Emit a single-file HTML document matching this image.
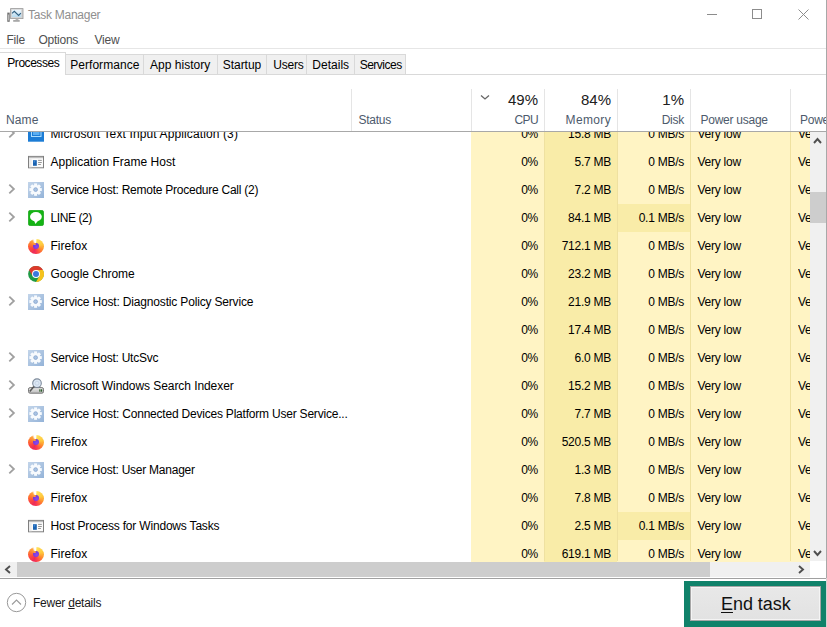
<!DOCTYPE html>
<html><head><meta charset="utf-8"><style>
html,body{margin:0;padding:0;}
body{width:827px;height:627px;overflow:hidden;background:#fff;position:relative;font-family:"Liberation Sans",sans-serif;font-size:12px;letter-spacing:-0.25px;color:#000;}
.abs{position:absolute;}
.t{position:absolute;white-space:pre;line-height:14px;}
.r{text-align:right;}
</style></head><body>

<svg class="abs" style="left:6px;top:8px" width="18" height="15" viewBox="0 0 18 15"><defs><linearGradient id="scr" x1="0" y1="0" x2="0" y2="1"><stop offset="0" stop-color="#eef6fc"/><stop offset="1" stop-color="#b6dbf0"/></linearGradient></defs><rect x="1.3" y="4.6" width="2.4" height="9.2" fill="#6e6e6e"/><rect x="2" y="6.5" width="1" height="6" fill="#b8b8b8"/><rect x="4.6" y="0.6" width="12.4" height="10" fill="#d4d4d4" stroke="#9a9a9a" stroke-width="0.8"/><rect x="5.9" y="1.7" width="9.3" height="7.3" fill="url(#scr)"/><polyline points="6,5.4 8.3,3.3 12.6,7.5 14.9,5.2" fill="none" stroke="#2f5f80" stroke-width="1.1"/><rect x="9.6" y="10.6" width="2.8" height="1.6" fill="#b4b4b4"/><rect x="7.2" y="12" width="6.5" height="1.8" fill="#a8a8a8"/></svg>
<div class="t" style="left:28px;top:8px;color:#8f8f8f;">Task Manager</div>
<div class="abs" style="left:707px;top:14px;width:10px;height:1px;background:#8c8c8c"></div>
<div class="abs" style="left:752px;top:9px;width:8px;height:8px;border:1px solid #8c8c8c"></div>
<svg class="abs" style="left:797.5px;top:8.5px" width="11" height="11" viewBox="0 0 11 11"><path d="M0.5 0.5 L10.5 10.5 M10.5 0.5 L0.5 10.5" stroke="#8c8c8c" stroke-width="1"/></svg>
<div class="abs" style="left:826px;top:0;width:1px;height:578px;background:#a8a8a8"></div>
<div class="t" style="left:6.5px;top:33px;color:#505050">File</div>
<div class="t" style="left:38.5px;top:33px;color:#505050">Options</div>
<div class="t" style="left:94.5px;top:33px;color:#505050">View</div>
<div class="abs" style="left:0;top:48px;width:826px;height:1px;background:#e6e6e6"></div>
<div class="abs" style="left:0;top:74px;width:826px;height:1px;background:#d9d9d9"></div>
<div class="abs" style="left:0px;top:52px;width:66px;height:23px;background:#fff;border-right:1px solid #d9d9d9;border-top:1px solid #d9d9d9;box-sizing:border-box"></div>
<div class="t" style="left:7.3px;top:56px;color:#000;letter-spacing:-0.46px">Processes</div>
<div class="abs" style="left:65px;top:54px;width:79px;height:21px;background:#f0f0f0;border:1px solid #d9d9d9;box-sizing:border-box"></div>
<div class="t" style="left:70.2px;top:57.7px;color:#000;letter-spacing:0.05px">Performance</div>
<div class="abs" style="left:143px;top:54px;width:75px;height:21px;background:#f0f0f0;border:1px solid #d9d9d9;box-sizing:border-box"></div>
<div class="t" style="left:150px;top:57.7px;color:#000;letter-spacing:0.02px">App history</div>
<div class="abs" style="left:217px;top:54px;width:50px;height:21px;background:#f0f0f0;border:1px solid #d9d9d9;box-sizing:border-box"></div>
<div class="t" style="left:222.8px;top:57.7px;color:#000;letter-spacing:-0.05px">Startup</div>
<div class="abs" style="left:266px;top:54px;width:41px;height:21px;background:#f0f0f0;border:1px solid #d9d9d9;box-sizing:border-box"></div>
<div class="t" style="left:273.3px;top:57.7px;color:#000;letter-spacing:-0.25px">Users</div>
<div class="abs" style="left:306px;top:54px;width:49px;height:21px;background:#f0f0f0;border:1px solid #d9d9d9;box-sizing:border-box"></div>
<div class="t" style="left:312.3px;top:57.7px;color:#000;letter-spacing:0.02px">Details</div>
<div class="abs" style="left:354px;top:54px;width:52px;height:21px;background:#f0f0f0;border:1px solid #d9d9d9;box-sizing:border-box"></div>
<div class="t" style="left:359.7px;top:57.7px;color:#000;letter-spacing:-0.51px">Services</div>
<div class="abs" style="left:471px;top:120px;width:73px;height:28px;background:#fff4c4"></div>
<div class="abs" style="left:544px;top:120px;width:73px;height:28px;background:#f9eca8"></div>
<div class="abs" style="left:617px;top:120px;width:73px;height:28px;background:#fff4c4"></div>
<div class="abs" style="left:690px;top:120px;width:100px;height:28px;background:#fff4c4"></div>
<div class="abs" style="left:790px;top:120px;width:20px;height:28px;background:#fff4c4"></div>
<svg class="abs" style="left:8px;top:128px" width="8" height="10" viewBox="0 0 8 10"><path d="M1.3 0.7 L5.9 5 L1.3 9.3" fill="none" stroke="#a0a0a0" stroke-width="1.8"/></svg>
<div class="abs" style="left:28px;top:126px;width:16px;height:16px"><svg width="16" height="16" viewBox="0 0 16 16"><rect x="0" y="1" width="16" height="14.7" fill="#1c7cd5"/><rect x="3.5" y="3" width="9.5" height="7.5" fill="none" stroke="#a8dcff" stroke-width="1"/><rect x="5" y="4.5" width="6.5" height="4.5" fill="#5aaef2"/></svg></div>
<div class="t" style="left:50.5px;top:127px;letter-spacing:0.12px">Microsoft Text Input Application (3)</div>
<div class="t r" style="left:471px;width:67px;top:127px">0%</div>
<div class="t r" style="left:544px;width:67px;top:127px">15.8 MB</div>
<div class="t r" style="left:617px;width:67px;top:127px">0 MB/s</div>
<div class="t" style="left:697.5px;top:127px">Very low</div>
<div class="t" style="left:798px;top:127px;width:12px;overflow:hidden">Ve</div>
<div class="abs" style="left:471px;top:148px;width:73px;height:28px;background:#fff4c4"></div>
<div class="abs" style="left:544px;top:148px;width:73px;height:28px;background:#f9eca8"></div>
<div class="abs" style="left:617px;top:148px;width:73px;height:28px;background:#fff4c4"></div>
<div class="abs" style="left:690px;top:148px;width:100px;height:28px;background:#fff4c4"></div>
<div class="abs" style="left:790px;top:148px;width:20px;height:28px;background:#fff4c4"></div>
<div class="abs" style="left:28px;top:154px;width:16px;height:16px"><svg width="16" height="16" viewBox="0 0 16 16"><rect x="0.5" y="2.4" width="15" height="11.4" fill="#fbfbfb" stroke="#7f7f7f"/><rect x="1" y="2.9" width="14" height="1.3" fill="#bdbdbd"/><rect x="1" y="4.2" width="2.6" height="9.1" fill="#ececec"/><rect x="5" y="6.2" width="3.8" height="5.6" fill="#1a62b0"/><rect x="5.6" y="6.6" width="1.6" height="2" fill="#3d86d4"/><rect x="10.1" y="5.9" width="3.7" height="0.9" fill="#8a8a8a"/><rect x="10.1" y="8" width="3.7" height="0.9" fill="#8a8a8a"/><rect x="10.1" y="10.1" width="2.8" height="0.9" fill="#8a8a8a"/></svg></div>
<div class="t" style="left:50.5px;top:155px;letter-spacing:0.0px">Application Frame Host</div>
<div class="t r" style="left:471px;width:67px;top:155px">0%</div>
<div class="t r" style="left:544px;width:67px;top:155px">5.7 MB</div>
<div class="t r" style="left:617px;width:67px;top:155px">0 MB/s</div>
<div class="t" style="left:697.5px;top:155px">Very low</div>
<div class="t" style="left:798px;top:155px;width:12px;overflow:hidden">Ve</div>
<div class="abs" style="left:471px;top:176px;width:73px;height:28px;background:#fff4c4"></div>
<div class="abs" style="left:544px;top:176px;width:73px;height:28px;background:#f9eca8"></div>
<div class="abs" style="left:617px;top:176px;width:73px;height:28px;background:#fff4c4"></div>
<div class="abs" style="left:690px;top:176px;width:100px;height:28px;background:#fff4c4"></div>
<div class="abs" style="left:790px;top:176px;width:20px;height:28px;background:#fff4c4"></div>
<svg class="abs" style="left:8px;top:184px" width="8" height="10" viewBox="0 0 8 10"><path d="M1.3 0.7 L5.9 5 L1.3 9.3" fill="none" stroke="#a0a0a0" stroke-width="1.8"/></svg>
<div class="abs" style="left:28px;top:182px;width:16px;height:16px"><svg width="16" height="16" viewBox="0 0 16 16"><defs><linearGradient id="gg" x1="0" y1="0" x2="1" y2="1"><stop offset="0" stop-color="#c3d5ea"/><stop offset="1" stop-color="#94b3d8"/></linearGradient></defs><rect x="0" y="0" width="16" height="16" fill="url(#gg)"/><g fill="#f7fafd"><circle cx="7.6" cy="7.6" r="4.7"/><rect x="6.1" y="1.4" width="3" height="12.4"/><rect x="1.4" y="6.1" width="12.4" height="3"/><rect x="6.1" y="1.4" width="3" height="12.4" transform="rotate(45 7.6 7.6)"/><rect x="6.1" y="1.4" width="3" height="12.4" transform="rotate(-45 7.6 7.6)"/></g><circle cx="7.6" cy="7.6" r="1.9" fill="#a9c3e3" stroke="#7f9fc8" stroke-width="0.7"/></svg></div>
<div class="t" style="left:50.5px;top:183px;letter-spacing:-0.25px">Service Host: Remote Procedure Call (2)</div>
<div class="t r" style="left:471px;width:67px;top:183px">0%</div>
<div class="t r" style="left:544px;width:67px;top:183px">7.2 MB</div>
<div class="t r" style="left:617px;width:67px;top:183px">0 MB/s</div>
<div class="t" style="left:697.5px;top:183px">Very low</div>
<div class="t" style="left:798px;top:183px;width:12px;overflow:hidden">Ve</div>
<div class="abs" style="left:471px;top:204px;width:73px;height:28px;background:#fff4c4"></div>
<div class="abs" style="left:544px;top:204px;width:73px;height:28px;background:#f9eca8"></div>
<div class="abs" style="left:617px;top:204px;width:73px;height:28px;background:#f9eca8"></div>
<div class="abs" style="left:690px;top:204px;width:100px;height:28px;background:#fff4c4"></div>
<div class="abs" style="left:790px;top:204px;width:20px;height:28px;background:#fff4c4"></div>
<svg class="abs" style="left:8px;top:212px" width="8" height="10" viewBox="0 0 8 10"><path d="M1.3 0.7 L5.9 5 L1.3 9.3" fill="none" stroke="#a0a0a0" stroke-width="1.8"/></svg>
<div class="abs" style="left:28px;top:210px;width:16px;height:16px"><svg width="16" height="16" viewBox="0 0 16 16"><rect x="0.3" y="0.3" width="15.4" height="15.4" rx="2.2" fill="#14b414" stroke="#0e9a0e" stroke-width="0.6"/><ellipse cx="7.9" cy="6.7" rx="5.9" ry="4.6" fill="#fff"/><path d="M6 10.5 L7.5 14 L10.2 10.5 Z" fill="#fff"/></svg></div>
<div class="t" style="left:50.5px;top:211px;letter-spacing:-0.41px">LINE (2)</div>
<div class="t r" style="left:471px;width:67px;top:211px">0%</div>
<div class="t r" style="left:544px;width:67px;top:211px">84.1 MB</div>
<div class="t r" style="left:617px;width:67px;top:211px">0.1 MB/s</div>
<div class="t" style="left:697.5px;top:211px">Very low</div>
<div class="t" style="left:798px;top:211px;width:12px;overflow:hidden">Ve</div>
<div class="abs" style="left:471px;top:232px;width:73px;height:28px;background:#fff4c4"></div>
<div class="abs" style="left:544px;top:232px;width:73px;height:28px;background:#f9eca8"></div>
<div class="abs" style="left:617px;top:232px;width:73px;height:28px;background:#fff4c4"></div>
<div class="abs" style="left:690px;top:232px;width:100px;height:28px;background:#fff4c4"></div>
<div class="abs" style="left:790px;top:232px;width:20px;height:28px;background:#fff4c4"></div>
<div class="abs" style="left:28px;top:238px;width:16px;height:16px"><div style="position:relative;width:16px;height:16px"><div style="position:absolute;left:0;top:0.6px;width:16px;height:15.4px;border-radius:50%;background:conic-gradient(from 0deg,#fff 0deg,#ffe15a 8deg,#ffc93e 70deg,#ff8a2e 120deg,#ff4a46 160deg,#ec2a5a 200deg,#ff4a3c 250deg,#ff7a30 290deg,#ffa23a 325deg,#fff 345deg)"></div><div style="position:absolute;left:4.8px;top:4.7px;width:6.6px;height:6.6px;border-radius:50%;background:radial-gradient(circle at 60% 65%,#8a4af0,#6a2ccc)"></div><div style="position:absolute;left:5.2px;top:4.6px;width:2.8px;height:2.4px;border-radius:50%;background:#ff9a3a"></div></div></div>
<div class="t" style="left:50.5px;top:239px;letter-spacing:0.0px">Firefox</div>
<div class="t r" style="left:471px;width:67px;top:239px">0%</div>
<div class="t r" style="left:544px;width:67px;top:239px">712.1 MB</div>
<div class="t r" style="left:617px;width:67px;top:239px">0 MB/s</div>
<div class="t" style="left:697.5px;top:239px">Very low</div>
<div class="t" style="left:798px;top:239px;width:12px;overflow:hidden">Ve</div>
<div class="abs" style="left:471px;top:260px;width:73px;height:28px;background:#fff4c4"></div>
<div class="abs" style="left:544px;top:260px;width:73px;height:28px;background:#f9eca8"></div>
<div class="abs" style="left:617px;top:260px;width:73px;height:28px;background:#fff4c4"></div>
<div class="abs" style="left:690px;top:260px;width:100px;height:28px;background:#fff4c4"></div>
<div class="abs" style="left:790px;top:260px;width:20px;height:28px;background:#fff4c4"></div>
<div class="abs" style="left:28px;top:266px;width:16px;height:16px"><svg width="16" height="16" viewBox="0 0 16 16"><circle cx="8" cy="8" r="7.9" fill="#1e9a45"/><path d="M8 4 L14.93 4 A8 8 0 0 0 1.07 4 L4.54 10 Z" fill="#dc3a2c"/><path d="M11.46 10 L8 16 A8 8 0 0 0 14.93 4 L8 4 Z" fill="#f6c21c"/><circle cx="8" cy="8" r="3.95" fill="#fff"/><circle cx="8" cy="8" r="3.0" fill="#3b78dc"/></svg></div>
<div class="t" style="left:50.5px;top:267px;letter-spacing:-0.04px">Google Chrome</div>
<div class="t r" style="left:471px;width:67px;top:267px">0%</div>
<div class="t r" style="left:544px;width:67px;top:267px">23.2 MB</div>
<div class="t r" style="left:617px;width:67px;top:267px">0 MB/s</div>
<div class="t" style="left:697.5px;top:267px">Very low</div>
<div class="t" style="left:798px;top:267px;width:12px;overflow:hidden">Ve</div>
<div class="abs" style="left:471px;top:288px;width:73px;height:28px;background:#fff4c4"></div>
<div class="abs" style="left:544px;top:288px;width:73px;height:28px;background:#f9eca8"></div>
<div class="abs" style="left:617px;top:288px;width:73px;height:28px;background:#fff4c4"></div>
<div class="abs" style="left:690px;top:288px;width:100px;height:28px;background:#fff4c4"></div>
<div class="abs" style="left:790px;top:288px;width:20px;height:28px;background:#fff4c4"></div>
<svg class="abs" style="left:8px;top:296px" width="8" height="10" viewBox="0 0 8 10"><path d="M1.3 0.7 L5.9 5 L1.3 9.3" fill="none" stroke="#a0a0a0" stroke-width="1.8"/></svg>
<div class="abs" style="left:28px;top:294px;width:16px;height:16px"><svg width="16" height="16" viewBox="0 0 16 16"><defs><linearGradient id="gg" x1="0" y1="0" x2="1" y2="1"><stop offset="0" stop-color="#c3d5ea"/><stop offset="1" stop-color="#94b3d8"/></linearGradient></defs><rect x="0" y="0" width="16" height="16" fill="url(#gg)"/><g fill="#f7fafd"><circle cx="7.6" cy="7.6" r="4.7"/><rect x="6.1" y="1.4" width="3" height="12.4"/><rect x="1.4" y="6.1" width="12.4" height="3"/><rect x="6.1" y="1.4" width="3" height="12.4" transform="rotate(45 7.6 7.6)"/><rect x="6.1" y="1.4" width="3" height="12.4" transform="rotate(-45 7.6 7.6)"/></g><circle cx="7.6" cy="7.6" r="1.9" fill="#a9c3e3" stroke="#7f9fc8" stroke-width="0.7"/></svg></div>
<div class="t" style="left:50.5px;top:295px;letter-spacing:-0.17px">Service Host: Diagnostic Policy Service</div>
<div class="t r" style="left:471px;width:67px;top:295px">0%</div>
<div class="t r" style="left:544px;width:67px;top:295px">21.9 MB</div>
<div class="t r" style="left:617px;width:67px;top:295px">0 MB/s</div>
<div class="t" style="left:697.5px;top:295px">Very low</div>
<div class="t" style="left:798px;top:295px;width:12px;overflow:hidden">Ve</div>
<div class="abs" style="left:471px;top:316px;width:73px;height:28px;background:#fff4c4"></div>
<div class="abs" style="left:544px;top:316px;width:73px;height:28px;background:#f9eca8"></div>
<div class="abs" style="left:617px;top:316px;width:73px;height:28px;background:#fff4c4"></div>
<div class="abs" style="left:690px;top:316px;width:100px;height:28px;background:#fff4c4"></div>
<div class="abs" style="left:790px;top:316px;width:20px;height:28px;background:#fff4c4"></div>
<div class="t r" style="left:471px;width:67px;top:323px">0%</div>
<div class="t r" style="left:544px;width:67px;top:323px">17.4 MB</div>
<div class="t r" style="left:617px;width:67px;top:323px">0 MB/s</div>
<div class="t" style="left:697.5px;top:323px">Very low</div>
<div class="t" style="left:798px;top:323px;width:12px;overflow:hidden">Ve</div>
<div class="abs" style="left:471px;top:344px;width:73px;height:28px;background:#fff4c4"></div>
<div class="abs" style="left:544px;top:344px;width:73px;height:28px;background:#f9eca8"></div>
<div class="abs" style="left:617px;top:344px;width:73px;height:28px;background:#fff4c4"></div>
<div class="abs" style="left:690px;top:344px;width:100px;height:28px;background:#fff4c4"></div>
<div class="abs" style="left:790px;top:344px;width:20px;height:28px;background:#fff4c4"></div>
<svg class="abs" style="left:8px;top:352px" width="8" height="10" viewBox="0 0 8 10"><path d="M1.3 0.7 L5.9 5 L1.3 9.3" fill="none" stroke="#a0a0a0" stroke-width="1.8"/></svg>
<div class="abs" style="left:28px;top:350px;width:16px;height:16px"><svg width="16" height="16" viewBox="0 0 16 16"><defs><linearGradient id="gg" x1="0" y1="0" x2="1" y2="1"><stop offset="0" stop-color="#c3d5ea"/><stop offset="1" stop-color="#94b3d8"/></linearGradient></defs><rect x="0" y="0" width="16" height="16" fill="url(#gg)"/><g fill="#f7fafd"><circle cx="7.6" cy="7.6" r="4.7"/><rect x="6.1" y="1.4" width="3" height="12.4"/><rect x="1.4" y="6.1" width="12.4" height="3"/><rect x="6.1" y="1.4" width="3" height="12.4" transform="rotate(45 7.6 7.6)"/><rect x="6.1" y="1.4" width="3" height="12.4" transform="rotate(-45 7.6 7.6)"/></g><circle cx="7.6" cy="7.6" r="1.9" fill="#a9c3e3" stroke="#7f9fc8" stroke-width="0.7"/></svg></div>
<div class="t" style="left:50.5px;top:351px;letter-spacing:-0.25px">Service Host: UtcSvc</div>
<div class="t r" style="left:471px;width:67px;top:351px">0%</div>
<div class="t r" style="left:544px;width:67px;top:351px">6.0 MB</div>
<div class="t r" style="left:617px;width:67px;top:351px">0 MB/s</div>
<div class="t" style="left:697.5px;top:351px">Very low</div>
<div class="t" style="left:798px;top:351px;width:12px;overflow:hidden">Ve</div>
<div class="abs" style="left:471px;top:372px;width:73px;height:28px;background:#fff4c4"></div>
<div class="abs" style="left:544px;top:372px;width:73px;height:28px;background:#f9eca8"></div>
<div class="abs" style="left:617px;top:372px;width:73px;height:28px;background:#fff4c4"></div>
<div class="abs" style="left:690px;top:372px;width:100px;height:28px;background:#fff4c4"></div>
<div class="abs" style="left:790px;top:372px;width:20px;height:28px;background:#fff4c4"></div>
<svg class="abs" style="left:8px;top:380px" width="8" height="10" viewBox="0 0 8 10"><path d="M1.3 0.7 L5.9 5 L1.3 9.3" fill="none" stroke="#a0a0a0" stroke-width="1.8"/></svg>
<div class="abs" style="left:28px;top:378px;width:16px;height:16px"><svg width="16" height="16" viewBox="0 0 16 16"><defs><linearGradient id="sg" x1="0" y1="0" x2="0" y2="1"><stop offset="0" stop-color="#e8e8e8"/><stop offset="1" stop-color="#bdbdbd"/></linearGradient></defs><rect x="0.5" y="9.6" width="15" height="5.6" rx="1.6" fill="url(#sg)" stroke="#6a6a6a" stroke-width="0.9"/><rect x="11.3" y="11.3" width="1.2" height="2.4" fill="#2a5a2a"/><rect x="13" y="11.3" width="1.2" height="2.4" fill="#2a5a2a"/><circle cx="9" cy="5.2" r="4.3" fill="#dde8f5" stroke="#7d8a9a" stroke-width="1.1"/><circle cx="9" cy="5.2" r="2" fill="none" stroke="#c0cee0" stroke-width="0.8"/><path d="M5.9 8.4 L1.8 13.4" stroke="#555" stroke-width="1.5"/></svg></div>
<div class="t" style="left:50.5px;top:379px;letter-spacing:-0.07px">Microsoft Windows Search Indexer</div>
<div class="t r" style="left:471px;width:67px;top:379px">0%</div>
<div class="t r" style="left:544px;width:67px;top:379px">15.2 MB</div>
<div class="t r" style="left:617px;width:67px;top:379px">0 MB/s</div>
<div class="t" style="left:697.5px;top:379px">Very low</div>
<div class="t" style="left:798px;top:379px;width:12px;overflow:hidden">Ve</div>
<div class="abs" style="left:471px;top:400px;width:73px;height:28px;background:#fff4c4"></div>
<div class="abs" style="left:544px;top:400px;width:73px;height:28px;background:#f9eca8"></div>
<div class="abs" style="left:617px;top:400px;width:73px;height:28px;background:#fff4c4"></div>
<div class="abs" style="left:690px;top:400px;width:100px;height:28px;background:#fff4c4"></div>
<div class="abs" style="left:790px;top:400px;width:20px;height:28px;background:#fff4c4"></div>
<svg class="abs" style="left:8px;top:408px" width="8" height="10" viewBox="0 0 8 10"><path d="M1.3 0.7 L5.9 5 L1.3 9.3" fill="none" stroke="#a0a0a0" stroke-width="1.8"/></svg>
<div class="abs" style="left:28px;top:406px;width:16px;height:16px"><svg width="16" height="16" viewBox="0 0 16 16"><defs><linearGradient id="gg" x1="0" y1="0" x2="1" y2="1"><stop offset="0" stop-color="#c3d5ea"/><stop offset="1" stop-color="#94b3d8"/></linearGradient></defs><rect x="0" y="0" width="16" height="16" fill="url(#gg)"/><g fill="#f7fafd"><circle cx="7.6" cy="7.6" r="4.7"/><rect x="6.1" y="1.4" width="3" height="12.4"/><rect x="1.4" y="6.1" width="12.4" height="3"/><rect x="6.1" y="1.4" width="3" height="12.4" transform="rotate(45 7.6 7.6)"/><rect x="6.1" y="1.4" width="3" height="12.4" transform="rotate(-45 7.6 7.6)"/></g><circle cx="7.6" cy="7.6" r="1.9" fill="#a9c3e3" stroke="#7f9fc8" stroke-width="0.7"/></svg></div>
<div class="t" style="left:50.5px;top:407px;letter-spacing:-0.21px">Service Host: Connected Devices Platform User Service...</div>
<div class="t r" style="left:471px;width:67px;top:407px">0%</div>
<div class="t r" style="left:544px;width:67px;top:407px">7.7 MB</div>
<div class="t r" style="left:617px;width:67px;top:407px">0 MB/s</div>
<div class="t" style="left:697.5px;top:407px">Very low</div>
<div class="t" style="left:798px;top:407px;width:12px;overflow:hidden">Ve</div>
<div class="abs" style="left:471px;top:428px;width:73px;height:28px;background:#fff4c4"></div>
<div class="abs" style="left:544px;top:428px;width:73px;height:28px;background:#f9eca8"></div>
<div class="abs" style="left:617px;top:428px;width:73px;height:28px;background:#fff4c4"></div>
<div class="abs" style="left:690px;top:428px;width:100px;height:28px;background:#fff4c4"></div>
<div class="abs" style="left:790px;top:428px;width:20px;height:28px;background:#fff4c4"></div>
<div class="abs" style="left:28px;top:434px;width:16px;height:16px"><div style="position:relative;width:16px;height:16px"><div style="position:absolute;left:0;top:0.6px;width:16px;height:15.4px;border-radius:50%;background:conic-gradient(from 0deg,#fff 0deg,#ffe15a 8deg,#ffc93e 70deg,#ff8a2e 120deg,#ff4a46 160deg,#ec2a5a 200deg,#ff4a3c 250deg,#ff7a30 290deg,#ffa23a 325deg,#fff 345deg)"></div><div style="position:absolute;left:4.8px;top:4.7px;width:6.6px;height:6.6px;border-radius:50%;background:radial-gradient(circle at 60% 65%,#8a4af0,#6a2ccc)"></div><div style="position:absolute;left:5.2px;top:4.6px;width:2.8px;height:2.4px;border-radius:50%;background:#ff9a3a"></div></div></div>
<div class="t" style="left:50.5px;top:435px;letter-spacing:0.0px">Firefox</div>
<div class="t r" style="left:471px;width:67px;top:435px">0%</div>
<div class="t r" style="left:544px;width:67px;top:435px">520.5 MB</div>
<div class="t r" style="left:617px;width:67px;top:435px">0 MB/s</div>
<div class="t" style="left:697.5px;top:435px">Very low</div>
<div class="t" style="left:798px;top:435px;width:12px;overflow:hidden">Ve</div>
<div class="abs" style="left:471px;top:456px;width:73px;height:28px;background:#fff4c4"></div>
<div class="abs" style="left:544px;top:456px;width:73px;height:28px;background:#f9eca8"></div>
<div class="abs" style="left:617px;top:456px;width:73px;height:28px;background:#fff4c4"></div>
<div class="abs" style="left:690px;top:456px;width:100px;height:28px;background:#fff4c4"></div>
<div class="abs" style="left:790px;top:456px;width:20px;height:28px;background:#fff4c4"></div>
<svg class="abs" style="left:8px;top:464px" width="8" height="10" viewBox="0 0 8 10"><path d="M1.3 0.7 L5.9 5 L1.3 9.3" fill="none" stroke="#a0a0a0" stroke-width="1.8"/></svg>
<div class="abs" style="left:28px;top:462px;width:16px;height:16px"><svg width="16" height="16" viewBox="0 0 16 16"><defs><linearGradient id="gg" x1="0" y1="0" x2="1" y2="1"><stop offset="0" stop-color="#c3d5ea"/><stop offset="1" stop-color="#94b3d8"/></linearGradient></defs><rect x="0" y="0" width="16" height="16" fill="url(#gg)"/><g fill="#f7fafd"><circle cx="7.6" cy="7.6" r="4.7"/><rect x="6.1" y="1.4" width="3" height="12.4"/><rect x="1.4" y="6.1" width="12.4" height="3"/><rect x="6.1" y="1.4" width="3" height="12.4" transform="rotate(45 7.6 7.6)"/><rect x="6.1" y="1.4" width="3" height="12.4" transform="rotate(-45 7.6 7.6)"/></g><circle cx="7.6" cy="7.6" r="1.9" fill="#a9c3e3" stroke="#7f9fc8" stroke-width="0.7"/></svg></div>
<div class="t" style="left:50.5px;top:463px;letter-spacing:-0.25px">Service Host: User Manager</div>
<div class="t r" style="left:471px;width:67px;top:463px">0%</div>
<div class="t r" style="left:544px;width:67px;top:463px">1.3 MB</div>
<div class="t r" style="left:617px;width:67px;top:463px">0 MB/s</div>
<div class="t" style="left:697.5px;top:463px">Very low</div>
<div class="t" style="left:798px;top:463px;width:12px;overflow:hidden">Ve</div>
<div class="abs" style="left:471px;top:484px;width:73px;height:28px;background:#fff4c4"></div>
<div class="abs" style="left:544px;top:484px;width:73px;height:28px;background:#f9eca8"></div>
<div class="abs" style="left:617px;top:484px;width:73px;height:28px;background:#fff4c4"></div>
<div class="abs" style="left:690px;top:484px;width:100px;height:28px;background:#fff4c4"></div>
<div class="abs" style="left:790px;top:484px;width:20px;height:28px;background:#fff4c4"></div>
<div class="abs" style="left:28px;top:490px;width:16px;height:16px"><div style="position:relative;width:16px;height:16px"><div style="position:absolute;left:0;top:0.6px;width:16px;height:15.4px;border-radius:50%;background:conic-gradient(from 0deg,#fff 0deg,#ffe15a 8deg,#ffc93e 70deg,#ff8a2e 120deg,#ff4a46 160deg,#ec2a5a 200deg,#ff4a3c 250deg,#ff7a30 290deg,#ffa23a 325deg,#fff 345deg)"></div><div style="position:absolute;left:4.8px;top:4.7px;width:6.6px;height:6.6px;border-radius:50%;background:radial-gradient(circle at 60% 65%,#8a4af0,#6a2ccc)"></div><div style="position:absolute;left:5.2px;top:4.6px;width:2.8px;height:2.4px;border-radius:50%;background:#ff9a3a"></div></div></div>
<div class="t" style="left:50.5px;top:491px;letter-spacing:0.0px">Firefox</div>
<div class="t r" style="left:471px;width:67px;top:491px">0%</div>
<div class="t r" style="left:544px;width:67px;top:491px">7.8 MB</div>
<div class="t r" style="left:617px;width:67px;top:491px">0 MB/s</div>
<div class="t" style="left:697.5px;top:491px">Very low</div>
<div class="t" style="left:798px;top:491px;width:12px;overflow:hidden">Ve</div>
<div class="abs" style="left:471px;top:512px;width:73px;height:28px;background:#fff4c4"></div>
<div class="abs" style="left:544px;top:512px;width:73px;height:28px;background:#f9eca8"></div>
<div class="abs" style="left:617px;top:512px;width:73px;height:28px;background:#f9eca8"></div>
<div class="abs" style="left:690px;top:512px;width:100px;height:28px;background:#fff4c4"></div>
<div class="abs" style="left:790px;top:512px;width:20px;height:28px;background:#fff4c4"></div>
<div class="abs" style="left:28px;top:518px;width:16px;height:16px"><svg width="16" height="16" viewBox="0 0 16 16"><rect x="0.5" y="2.4" width="15" height="11.4" fill="#fbfbfb" stroke="#7f7f7f"/><rect x="1" y="2.9" width="14" height="1.3" fill="#bdbdbd"/><rect x="1" y="4.2" width="2.6" height="9.1" fill="#ececec"/><rect x="5" y="6.2" width="3.8" height="5.6" fill="#1a62b0"/><rect x="5.6" y="6.6" width="1.6" height="2" fill="#3d86d4"/><rect x="10.1" y="5.9" width="3.7" height="0.9" fill="#8a8a8a"/><rect x="10.1" y="8" width="3.7" height="0.9" fill="#8a8a8a"/><rect x="10.1" y="10.1" width="2.8" height="0.9" fill="#8a8a8a"/></svg></div>
<div class="t" style="left:50.5px;top:519px;letter-spacing:-0.19px">Host Process for Windows Tasks</div>
<div class="t r" style="left:471px;width:67px;top:519px">0%</div>
<div class="t r" style="left:544px;width:67px;top:519px">2.5 MB</div>
<div class="t r" style="left:617px;width:67px;top:519px">0.1 MB/s</div>
<div class="t" style="left:697.5px;top:519px">Very low</div>
<div class="t" style="left:798px;top:519px;width:12px;overflow:hidden">Ve</div>
<div class="abs" style="left:471px;top:540px;width:73px;height:28px;background:#fff4c4"></div>
<div class="abs" style="left:544px;top:540px;width:73px;height:28px;background:#f9eca8"></div>
<div class="abs" style="left:617px;top:540px;width:73px;height:28px;background:#fff4c4"></div>
<div class="abs" style="left:690px;top:540px;width:100px;height:28px;background:#fff4c4"></div>
<div class="abs" style="left:790px;top:540px;width:20px;height:28px;background:#fff4c4"></div>
<div class="abs" style="left:28px;top:546px;width:16px;height:16px"><div style="position:relative;width:16px;height:16px"><div style="position:absolute;left:0;top:0.6px;width:16px;height:15.4px;border-radius:50%;background:conic-gradient(from 0deg,#fff 0deg,#ffe15a 8deg,#ffc93e 70deg,#ff8a2e 120deg,#ff4a46 160deg,#ec2a5a 200deg,#ff4a3c 250deg,#ff7a30 290deg,#ffa23a 325deg,#fff 345deg)"></div><div style="position:absolute;left:4.8px;top:4.7px;width:6.6px;height:6.6px;border-radius:50%;background:radial-gradient(circle at 60% 65%,#8a4af0,#6a2ccc)"></div><div style="position:absolute;left:5.2px;top:4.6px;width:2.8px;height:2.4px;border-radius:50%;background:#ff9a3a"></div></div></div>
<div class="t" style="left:50.5px;top:547px;letter-spacing:0.0px">Firefox</div>
<div class="t r" style="left:471px;width:67px;top:547px">0%</div>
<div class="t r" style="left:544px;width:67px;top:547px">619.1 MB</div>
<div class="t r" style="left:617px;width:67px;top:547px">0 MB/s</div>
<div class="t" style="left:697.5px;top:547px">Very low</div>
<div class="t" style="left:798px;top:547px;width:12px;overflow:hidden">Ve</div>
<div class="abs" style="left:544px;top:131px;width:1px;height:430px;background:#efe1a0"></div>
<div class="abs" style="left:617px;top:131px;width:1px;height:430px;background:#efe1a0"></div>
<div class="abs" style="left:690px;top:131px;width:1px;height:430px;background:#efe1a0"></div>
<div class="abs" style="left:790px;top:131px;width:1px;height:430px;background:#efe1a0"></div>
<div class="abs" style="left:0;top:75px;width:824px;height:56px;background:#fff"></div>
<div class="abs" style="left:0;top:131px;width:826px;height:1px;background:#a8a8a8"></div>
<div class="abs" style="left:351px;top:89px;width:1px;height:42px;background:#e5e5e5"></div>
<div class="abs" style="left:471px;top:89px;width:1px;height:42px;background:#e5e5e5"></div>
<div class="abs" style="left:544px;top:89px;width:1px;height:42px;background:#e5e5e5"></div>
<div class="abs" style="left:617px;top:89px;width:1px;height:42px;background:#e5e5e5"></div>
<div class="abs" style="left:690px;top:89px;width:1px;height:42px;background:#e5e5e5"></div>
<div class="abs" style="left:790px;top:89px;width:1px;height:42px;background:#e5e5e5"></div>
<div class="t" style="left:6px;top:113px;color:#4d5a6c;letter-spacing:0.1px">Name</div>
<div class="t" style="left:358.5px;top:113px;color:#4d5a6c">Status</div>
<div class="t r" style="left:471px;width:67px;top:113px;color:#4d5a6c;letter-spacing:-0.6px">CPU</div>
<div class="t r" style="left:544px;width:67px;top:113px;color:#4d5a6c;letter-spacing:0.35px">Memory</div>
<div class="t r" style="left:617px;width:67px;top:113px;color:#4d5a6c">Disk</div>
<div class="t" style="left:700.5px;top:113px;color:#4d5a6c">Power usage</div>
<div class="t" style="left:800px;top:113px;width:26px;overflow:hidden;color:#4d5a6c">Power usage trend</div>
<div class="t r" style="left:471px;width:67px;top:90.5px;font-size:15px;line-height:18px;letter-spacing:0;color:#202020">49%</div>
<div class="t r" style="left:544px;width:67px;top:90.5px;font-size:15px;line-height:18px;letter-spacing:0;color:#202020">84%</div>
<div class="t r" style="left:617px;width:67px;top:90.5px;font-size:15px;line-height:18px;letter-spacing:0;color:#202020">1%</div>
<svg class="abs" style="left:480px;top:93.5px" width="10" height="7" viewBox="0 0 10 7"><path d="M1 1.5 L5 5 L9 1.5" fill="none" stroke="#666" stroke-width="1.3"/></svg>
<div class="abs" style="left:810px;top:132px;width:16px;height:429px;background:#f0f0f0"></div>
<div class="abs" style="left:810px;top:192px;width:16px;height:31px;background:#cdcdcd"></div>
<svg class="abs" style="left:813px;top:137px" width="9" height="8" viewBox="0 0 9 8"><path d="M1 6 L4.5 2 L8 6" fill="none" stroke="#4f4f4f" stroke-width="1.9"/></svg>
<svg class="abs" style="left:813px;top:549px" width="9" height="8" viewBox="0 0 9 8"><path d="M1 2 L4.5 6 L8 2" fill="none" stroke="#4f4f4f" stroke-width="1.9"/></svg>
<div class="abs" style="left:0;top:562px;width:810px;height:15px;background:#f0f0f0"></div>
<div class="abs" style="left:17px;top:562px;width:693px;height:15px;background:#cdcdcd"></div>
<svg class="abs" style="left:4px;top:565px" width="8" height="9" viewBox="0 0 8 9"><path d="M6 1 L2 4.5 L6 8" fill="none" stroke="#4f4f4f" stroke-width="1.9"/></svg>
<svg class="abs" style="left:797px;top:565px" width="8" height="9" viewBox="0 0 8 9"><path d="M2 1 L6 4.5 L2 8" fill="none" stroke="#4f4f4f" stroke-width="1.9"/></svg>
<div class="abs" style="left:0;top:578px;width:827px;height:1px;background:#a0a0a0"></div>
<div class="abs" style="left:826px;top:578px;width:1px;height:49px;background:#d4d4d4"></div>
<svg class="abs" style="left:6px;top:592px" width="21" height="21" viewBox="0 0 21 21"><circle cx="10.5" cy="10.5" r="9.2" fill="none" stroke="#9a9a9a" stroke-width="1"/><path d="M6 12.5 L10.5 8 L15 12.5" fill="none" stroke="#9a9a9a" stroke-width="1.1"/></svg>
<div class="t" style="left:33px;top:596px;color:#1a1a1a">Fewer <u>d</u>etails</div>
<div class="abs" style="left:684px;top:581px;width:142px;height:46px;background:#10826a"></div>
<div class="abs" style="left:690px;top:586px;width:131px;height:35px;background:linear-gradient(#e8e8e8,#e2e2e2);border:1px solid #a6a6a6;box-shadow:inset 0 0 0 1px #f4f4f4;box-sizing:border-box"></div>
<div class="t" style="text-align:left;top:593.5px;left:721px;width:auto;font-size:18px;line-height:20px;letter-spacing:-0.05px;color:#111"><u style="text-underline-offset:2px">E</u>nd task</div>
</body></html>
